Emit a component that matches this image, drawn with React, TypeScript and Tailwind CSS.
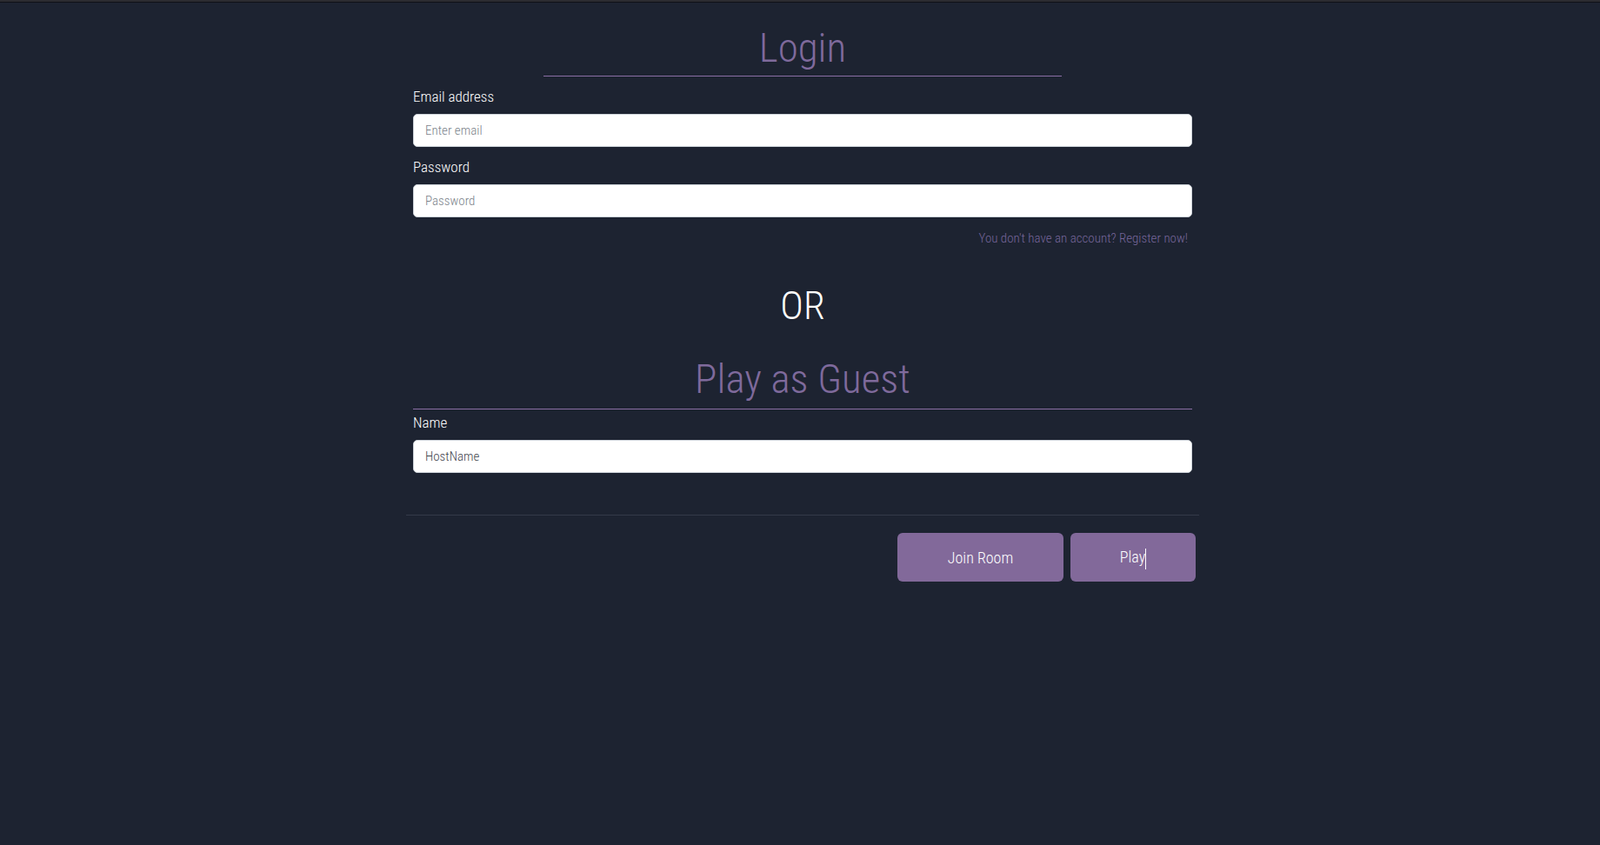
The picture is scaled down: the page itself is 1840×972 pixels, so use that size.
import React from 'react';

const Field: React.FC<{ label: string; placeholder?: string; value?: string; type?: string; last?: boolean }> = ({
  label,
  placeholder,
  value,
  type = 'text',
  last,
}) => (
  <div className={last ? '' : 'mb-[11px]'}>
    <label className="block leading-6 text-[17px] font-light text-white mb-2">{label}</label>
    <input
      type={type}
      placeholder={placeholder}
      defaultValue={value}
      className="block w-full h-[38px] rounded-[5px] border border-[#ced4da] bg-white px-[13px] text-[15px] font-light text-[#3f464d] placeholder:text-[#7c838b] outline-none"
    />
  </div>
);

export default function App() {
  return (
    <div className="min-h-screen bg-[#1d2331] font-['Roboto_Condensed','Roboto',sans-serif]">
      <div className="h-[2px] bg-[#2c2c31]" />
      <div className="h-px bg-[#0f1117]" />

      <div className="w-[918px] mx-auto pl-[6px]">
        <div className="px-2">
          {/* Login */}
          <div className="w-[596px] mx-auto border-b border-[#8a6ea4] pt-[20px] text-center">
            <h1 className="text-[47px] leading-[64px] font-light text-[#7f6a9c]">Login</h1>
          </div>
          <div className="mt-[11px]">
            <Field label="Email address" placeholder="Enter email" type="email" />
            <Field label="Password" placeholder="Password" type="password" last />
          </div>
          <p className="mt-[14px] pr-[5px] text-right text-[15px] leading-[21px] font-light text-[#76659a]">
            You don't have an account? Register now!
          </p>

          <div className="mt-[37px] text-center text-[45px] leading-[60px] font-light text-white">OR</div>

          {/* Guest */}
          <div className="mt-[24px] border-b border-[#8a6ea4] pb-[4px] text-center">
            <h2 className="text-[47px] leading-[60px] font-light text-[#7f6a9c]">Play as Guest</h2>
          </div>
          <div className="mt-[3px]">
            <Field label="Name" value="HostName" last />
          </div>
        </div>

        {/* footer */}
        <div className="mt-[48px] border-t border-[#343a49] pt-5 pr-1 flex justify-end gap-2">
          <button className="w-[191px] h-[56px] rounded-[6px] bg-[#82699a] text-[18px] font-light text-white">
            Join Room
          </button>
          <button className="w-[144px] h-[56px] rounded-[6px] bg-[#82699a] text-[18px] font-light text-white">
            Play<span className="inline-block w-px h-[24px] bg-white align-middle" />
          </button>
        </div>
      </div>
    </div>
  );
}
